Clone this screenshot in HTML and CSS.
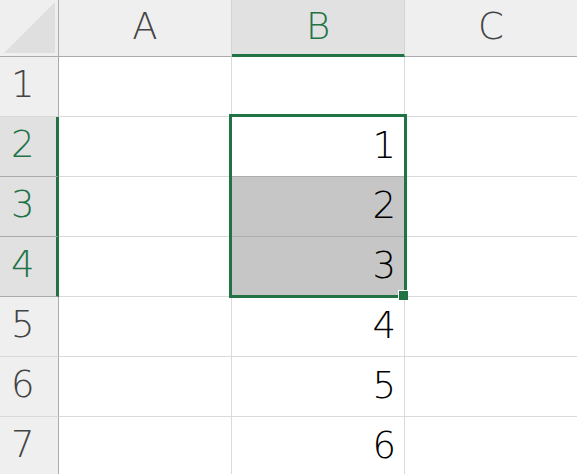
FILE: index.html
```html
<!DOCTYPE html>
<html lang="en">
<head>
    <meta charset="utf-8" />
    <title>Sheet</title>
    <link rel="stylesheet" href="styles.css">
</head>
<body>

    <div class="sheet">
        <div class="corner"><div class="tri"></div></div>
        <div class="colHead">A</div>
        <div class="colHead active">B</div>
        <div class="colHead last">C</div>

        <div class="rowHead">1</div>
        <div class="cell"></div>
        <div class="cell num"></div>
        <div class="cell last"></div>

        <div class="rowHead active">2</div>
        <div class="cell"></div>
        <div class="cell num above">1</div>
        <div class="cell last"></div>

        <div class="rowHead active">3</div>
        <div class="cell"></div>
        <div class="cell num picked above">2</div>
        <div class="cell last"></div>

        <div class="rowHead active">4</div>
        <div class="cell"></div>
        <div class="cell num picked">3</div>
        <div class="cell last"></div>

        <div class="rowHead">5</div>
        <div class="cell"></div>
        <div class="cell num">4</div>
        <div class="cell last"></div>

        <div class="rowHead">6</div>
        <div class="cell"></div>
        <div class="cell num">5</div>
        <div class="cell last"></div>

        <div class="rowHead">7</div>
        <div class="cell"></div>
        <div class="cell num">6</div>
        <div class="cell last"></div>

        <div class="selection"></div>
        <div class="handle"></div>
    </div>

</body>
</html>
```

FILE: styles.css
```css
body{
    margin: 0;
    background: #fff;
    overflow: hidden;
}

.sheet{
    position: relative;
    display: grid;
    grid-template-columns: 59px 173px 173px 1fr;
    grid-template-rows: 57px repeat(7, 60px);
    width: 577px;
    height: 474px;
    overflow: hidden;
    font-family: "DejaVu Sans", sans-serif;
    font-weight: 200;
    font-size: 37px;
}

.corner, .colHead, .rowHead{
    box-sizing: border-box;
    background: #efefef;
    color: #444;
    border-right: 1px solid #ababab;
    border-bottom: 1px solid #ababab;
}

.corner{
    position: relative;
}

.tri{
    position: absolute;
    left: 4px;
    top: 2px;
    width: 51px;
    height: 51px;
    background: #dfdfdf;
    clip-path: polygon(0 100%, 100% 100%, 100% 0);
}

.colHead{
    display: flex;
    align-items: center;
    justify-content: center;
    padding-bottom: 4px;
    border-right-color: #d4d4d4;
}

.colHead.active{
    background: #e1e1e1;
    color: #217346;
    border-bottom: 3px solid #217346;
    padding-bottom: 2px;
}

.colHead.last{
    border-right: none;
}

.rowHead{
    display: flex;
    align-items: center;
    padding-left: 11px;
    padding-bottom: 4px;
    border-bottom-color: #dadada;
}

.rowHead.active{
    background: #e1e1e1;
    color: #217346;
    border-bottom-color: #ababab;
    border-right: 3px solid #217346;
}

.cell{
    box-sizing: border-box;
    border-right: 1px solid #dadada;
    border-bottom: 1px solid #dadada;
    color: #000;
}

.cell.last{
    border-right: none;
}

.num{
    display: flex;
    align-items: center;
    justify-content: flex-end;
    padding-right: 8px;
    padding-bottom: 2px;
}

.picked{
    background: #c6c6c6;
}

.above{
    border-bottom-color: #adadad;
}

.selection{
    position: absolute;
    left: 229px;
    top: 114px;
    width: 178px;
    height: 184px;
    box-sizing: border-box;
    border: 3px solid #217346;
}

.handle{
    position: absolute;
    left: 398px;
    top: 290px;
    width: 10px;
    height: 10px;
    box-sizing: border-box;
    background: #217346;
    border: 1px solid #fff;
    border-right: none;
    border-bottom: none;
}
```
